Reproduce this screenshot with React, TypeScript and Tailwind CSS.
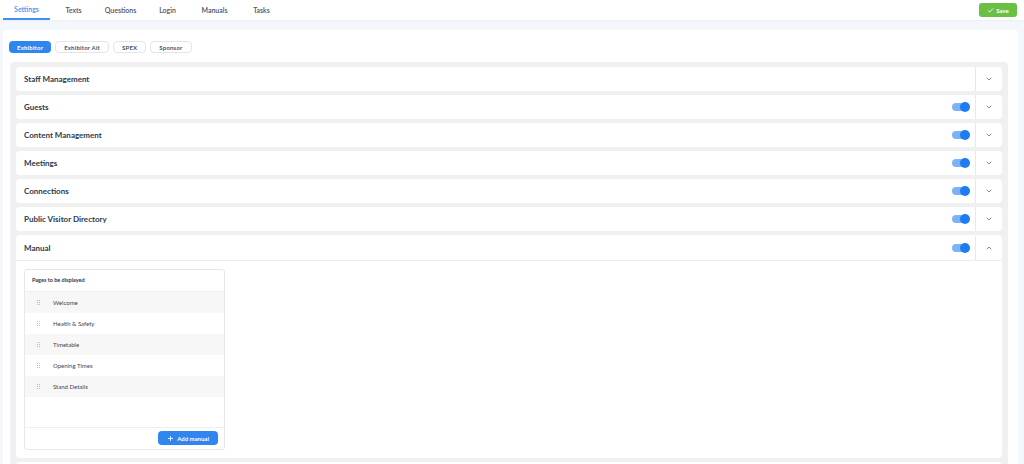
import { Check, ChevronDown, ChevronUp, Plus } from "lucide-react";

const tabs = ["Settings", "Texts", "Questions", "Login", "Manuals", "Tasks"];
const roles = ["Exhibitor", "Exhibitor Alt", "SPEX", "Sponsor"];

const sections = [
  { title: "Staff Management", toggle: false },
  { title: "Guests", toggle: true },
  { title: "Content Management", toggle: true },
  { title: "Meetings", toggle: true },
  { title: "Connections", toggle: true },
  { title: "Public Visitor Directory", toggle: true },
];

const pages = ["Welcome", "Health & Safety", "Timetable", "Opening Times", "Stand Details"];

function Toggle() {
  return (
    <div className="relative w-[17px] h-[8px] rounded-full bg-[#7db2f6]">
      <div className="absolute right-[-1px] top-[-1px] w-[10px] h-[10px] rounded-full bg-[#1f7bf2]" />
    </div>
  );
}

function Grip() {
  return (
    <div className="grid grid-cols-2 gap-x-[1px] gap-y-[1px]">
      {Array.from({ length: 6 }).map((_, i) => (
        <div key={i} className="w-[1px] h-[1px] bg-[#b8bec6]" />
      ))}
    </div>
  );
}

function SectionHeader({ title, toggle, open }: { title: string; toggle: boolean; open?: boolean }) {
  return (
    <div className="flex items-stretch h-[24px]">
      <div className="flex-1 flex items-center pl-[8px] text-[8px] font-bold text-[#2c3a4b]">{title}</div>
      <div className="flex items-center pr-[6px]">{toggle && <Toggle />}</div>
      <div className="w-[27px] border-l border-[#e8e8e8] flex items-center justify-center text-[#6b7480]">
        {open ? <ChevronUp size={8} strokeWidth={2.5} /> : <ChevronDown size={8} strokeWidth={2.5} />}
      </div>
    </div>
  );
}

export default function App() {
  return (
    <div className="w-[1024px] h-[464px] overflow-hidden bg-[#f4f7fb]" style={{ fontFamily: "Lato, 'Noto Sans', sans-serif" }}>
      <div className="h-[20px] bg-white flex items-stretch justify-between pl-[3px] pr-[7px] shadow-[0_1px_2px_rgba(0,0,0,0.04)]">
        <div className="flex">
          {tabs.map((t, i) => (
            <div
              key={t}
              className={`w-[47px] flex items-center justify-center text-[7px] font-semibold ${
                i === 0 ? "text-[#3d8ff0] border-b-2 border-[#3d8ff0]" : "text-[#4a5563]"
              }`}
            >
              {t}
            </div>
          ))}
        </div>
        <div className="flex items-center">
          <div className="h-[14px] w-[38px] rounded-[3px] bg-[#6cbf45] flex items-center justify-center gap-[2px] text-white text-[6px] font-bold">
            <Check size={7} strokeWidth={3} />
            Save
          </div>
        </div>
      </div>

      <div className="mt-[10px] ml-[3px] w-[1015px] h-[440px] bg-white rounded-[3px] pt-[11px] pl-[6px] pr-[10px]">
        <div className="flex gap-[4px]">
          {roles.map((r, i) => (
            <div
              key={r}
              className={`h-[12px] flex items-center rounded-[4px] text-[6px] font-bold tracking-[0.2px] ${
                i === 0
                  ? "bg-[#2e86ee] text-white px-[8px]"
                  : "bg-white border border-[#e2e5ea] text-[#4a5563] px-[8px]"
              }`}
            >
              {r}
            </div>
          ))}
        </div>

        <div className="mt-[9px] ml-[1px] bg-[#f0f0f0] rounded-[4px] px-[6px] pt-[5px] h-[420px] flex flex-col gap-[4px]">
          {sections.map((s) => (
            <div key={s.title} className="bg-white rounded-[4px] h-[25px] flex flex-col justify-center">
              <SectionHeader title={s.title} toggle={s.toggle} />
            </div>
          ))}

          <div className="bg-white rounded-[4px] pt-[0.5px]">
            <div className="border-b border-[#ececec]">
              <SectionHeader title="Manual" toggle open />
            </div>
            <div className="p-[8px]">
              <div className="w-[201px] border border-[#e6e8eb] rounded-[3px]">
                <div className="h-[22px] flex items-center pl-[7px] text-[5.5px] font-bold text-[#2c3a4b] border-b border-[#eceef0]">
                  Pages to be displayed
                </div>
                <div className="h-[135px]">
                  {pages.map((p, i) => (
                    <div
                      key={p}
                      className={`h-[21px] flex items-center pl-[12px] gap-[13px] text-[6px] text-[#3b4654] ${
                        i % 2 === 0 ? "bg-[#f7f7f8]" : "bg-white"
                      }`}
                    >
                      <Grip />
                      {p}
                    </div>
                  ))}
                </div>
                <div className="h-[22px] border-t border-[#eceef0] flex items-center justify-end pr-[6px]">
                  <div className="h-[14px] w-[60px] rounded-[4px] bg-[#2e86ee] text-white text-[6px] font-bold flex items-center justify-center gap-[3px]">
                    <Plus size={7} strokeWidth={3} />
                    Add manual
                  </div>
                </div>
              </div>
            </div>
          </div>

          <div className="bg-white rounded-[4px] h-[25px]" />
        </div>
      </div>
    </div>
  );
}
